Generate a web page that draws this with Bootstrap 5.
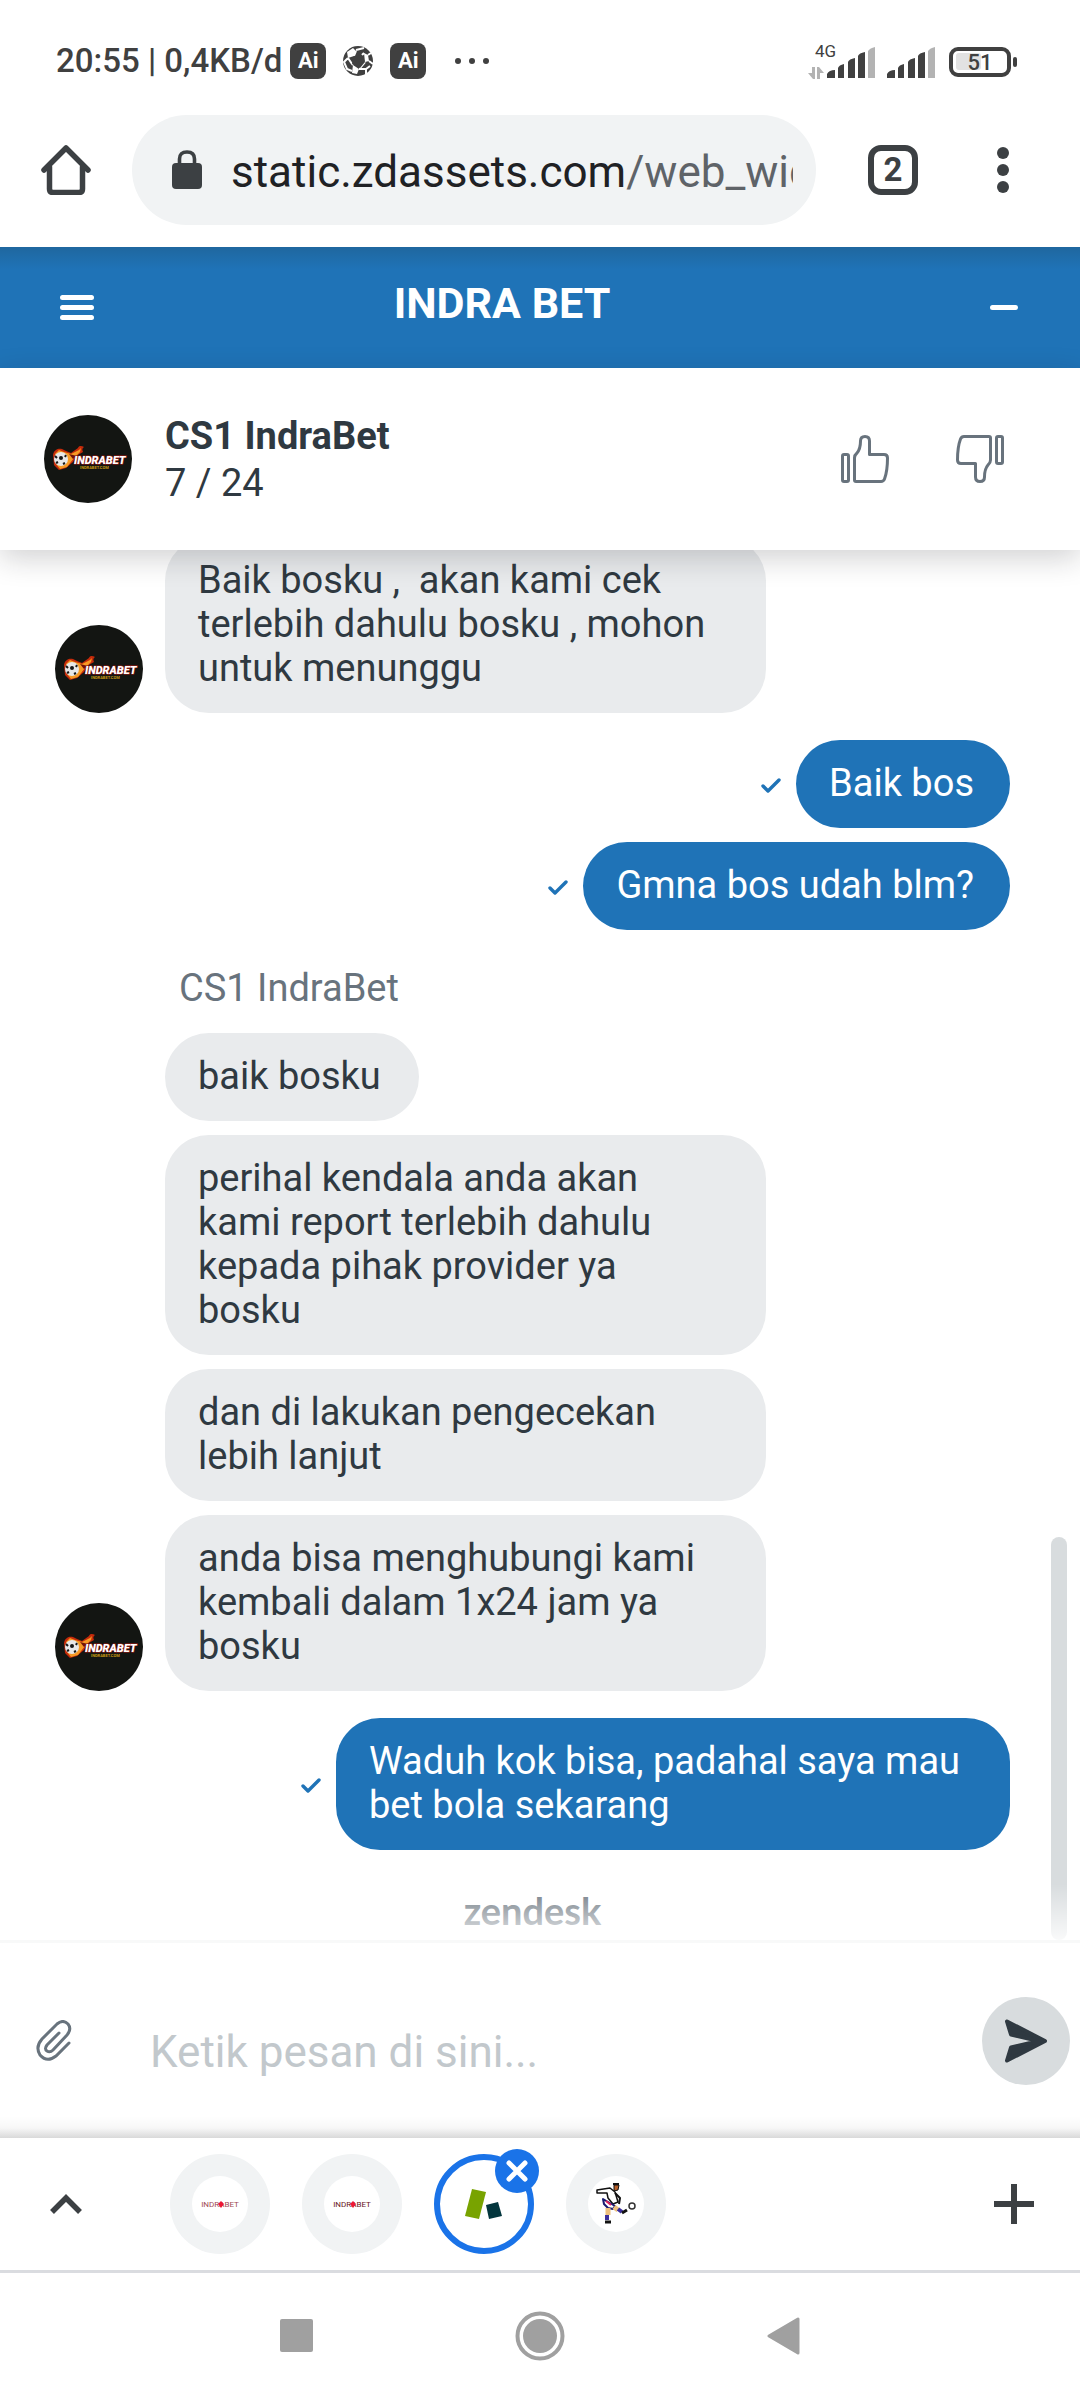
<!DOCTYPE html>
<html lang="id">
<head>
<meta charset="utf-8">
<meta name="viewport" content="width=device-width, initial-scale=1">
<title>INDRA BET – Live chat</title>
<link href="https://cdn.jsdelivr.net/npm/bootstrap@5.3.0/dist/css/bootstrap.min.css" rel="stylesheet">
<style>
  :root { --brand: #1f73b7; --ink: #2f3941; --icon: #3c4043; --muted-ink: #68737d; }
  body { font-family: Roboto, "Liberation Sans", sans-serif; color: var(--ink); background: #fff; }
  svg { display: block; flex: none; }
  .plain { border: 0; background: none; padding: 0; color: inherit; display: block; flex: none; }

  .status-bar { height: 115px; padding: 6px 63px 0 56px; color: #404040; }
  .status-clock { font-size: 33px; line-height: 40px; font-weight: 500; }
  .ai-badge { width: 36px; height: 36px; border-radius: 8px; background: #404040; color: #fff; font-size: 22px; line-height: 36px; font-weight: 700; text-align: center; }

  .address-bar { padding: 0 71px 22px 41px; color: var(--icon); }
  .url-pill { height: 110px; border-radius: 55px; background: #f1f3f4; margin-left: 41px; margin-right: 52px; padding-left: 40px; padding-right: 23px; min-width: 0; }
  .url-link { font-size: 44px; line-height: 56px; padding-top: 4px; color: #202124; margin-left: 29px; min-width: 0; }
  .url-path { color: #5f6368; }
  .tab-count { width: 50px; height: 50px; border: 6px solid var(--icon); border-radius: 13px; font-size: 33px; line-height: 38px; font-weight: 700; margin-right: 79px; text-align: center; }

  .widget-head { height: 121px; padding: 0 62px 0 60px; color: #fff; background: linear-gradient(#1f679f, var(--brand) 22px); }
  .widget-title { font-size: 43px; line-height: 48px; padding: 0 80px 10px 0; font-weight: 700; }
  .agent-bar { height: 182px; padding: 0 76px 0 44px; z-index: 2; background: #fff; box-shadow: 0 8px 28px rgba(23, 26, 28, .2); }
  .agent-text { font-size: 38px; line-height: 47px; margin-left: 33px; padding-top: 2px; }
  .rating { gap: 67px; color: var(--muted-ink); }

  .chat-log { flex: 1 0 1390px; height: 1390px; }
  .thread { padding: 0 70px 8px 55px; gap: 14px; font-size: 38px; line-height: 44px; }
  .turn { gap: 14px; }
  .turn + .turn { margin-top: 13px; }
  .agent-row { gap: 22px; }
  .agent-col { max-width: 601px; gap: 14px; }
  .bubble { border-radius: 44px; padding: 21px 38px 23px 33px; background: #e9ebed; white-space: pre-wrap; }
  .sent { gap: 15px; color: var(--brand); }
  .sent .bubble { background: var(--brand); color: #fff; max-width: 674px; padding-right: 36px; }
  .speaker { color: var(--muted-ink); padding-left: 14px; padding-top: 11px; line-height: 41px; margin-bottom: 10px; }
  .powered { font-family: Lato, sans-serif; font-weight: 700; font-size: 38px; line-height: 44px; color: var(--muted-ink); text-align: center; margin-top: 24px; }
  .log-thumb { width: 16px; height: 403px; right: 13px; bottom: 0; border-radius: 8px; background: #d8dcde; }
  .log-fade { height: 56px; bottom: 0; background: linear-gradient(rgba(255,255,255,0), rgba(255,255,255,.85)); }

  .composer { height: 198px; border-top: 3px solid #f8f9f9; padding: 0 10px 0 36px; background: linear-gradient(rgba(0,0,0,0) calc(100% - 22px), rgba(0,0,0,.03) calc(100% - 10px), rgba(0,0,0,.15)); }
  .composer-input { border: 0; outline: 0; background: none; font-size: 44px; line-height: 56px; padding: 22px 0 0; margin-left: 78px; min-width: 0; color: var(--ink); }
  .composer-input::placeholder { color: #c2c8cc; opacity: 1; }
  .send-btn { width: 88px; height: 88px; border-radius: 50%; background: #d8dcde; }

  .tab-strip { height: 135px; padding: 0 46px 0 50px; border-bottom: 3px solid #dadce0; color: var(--icon); }
  .tab-list { gap: 32px; margin-left: 88px; }
  .site-tab { width: 100px; height: 100px; border-radius: 50%; background: #f1f3f4; }
  .site-tab-active { background: #fff; border: 6px solid #1a73e8; }
  .tab-icon { width: 56px; height: 56px; border-radius: 50%; background: #fff; }
  .tab-close { width: 44px; height: 44px; border-radius: 50%; background: #1a73e8; top: -5px; right: -5px; }

  .system-nav { flex: 1 0 127px; gap: 202px; padding-bottom: 2px; }
</style>
</head>
<body>
<svg width="0" height="0" class="position-absolute" aria-hidden="true">
  <defs>
    <symbol id="agent-logo" viewBox="0 0 88 88">
      <circle cx="44" cy="44" r="44" fill="#131512"/>
      <path d="M9 40C10 34 15 33 18 34L22 36L27 38L34 33C35 30 38 31 40 32C38 33 38 35 39 37L32 41L29 47L22 53L15 55L10 50Z" fill="#c52a0a"/>
      <path d="M11 39L15 35L20 37L27 39L35 35L37 33L36 37L30 43L23 52L16 54L12 49Z" fill="#f69a24"/>
      <path d="M25 39L33 41L29 44Z" fill="#731207"/>
      <circle cx="17" cy="44" r="7" fill="#e8e8e8"/>
      <circle cx="17" cy="43" r="2" fill="#161616"/>
      <path d="M11 41L13 43M22 40L21 42M12 48L14 47M19 49L21 48" stroke="#161616" stroke-width="2"/>
      <text x="30" y="49" font-family="Roboto, sans-serif" font-size="11" font-weight="900" font-style="italic" fill="#fff" stroke="#a11c14" stroke-width="1" paint-order="stroke">INDRABET</text>
      <text x="36" y="54" font-family="Roboto, sans-serif" font-size="4" font-weight="700" fill="#c99a12">INDRABET.COM</text>
    </symbol>
    <symbol id="sent-tick" viewBox="0 0 20 16"><path d="M2 8L7 13L18 2" fill="none" stroke="currentColor" stroke-width="3.4" stroke-linecap="round" stroke-linejoin="round"/></symbol>
    <symbol id="signal" viewBox="0 0 49 31">
      <path d="M0 31V27Q2 23 8 23V31ZM11 31V21Q12 18 17 17V31ZM21 31V15Q22 12 28 11V31ZM31 31V9Q32 6 38 5V31Z" fill="#404040"/>
      <path d="M41 31V4Q43 1 48 0V31Z" fill="#b3b3b3"/>
    </symbol>
    <symbol id="thumb" viewBox="0 0 48 48">
      <g fill="none" stroke="currentColor" stroke-width="3" stroke-linejoin="round">
        <rect x="1.500" y="19.500" width="6" height="27" rx="1.500"/>
        <path d="M13.500 45V23Q13.500 20 16 18Q19.500 14 19.500 6Q19.500 1.500 24 1.500Q28.500 1.500 28.500 6V19.500H43Q46.500 19.500 46.500 23Q46.500 36 43.500 44Q42.500 46.500 40 46.500H15Q13.500 46.500 13.500 45Z"/>
      </g>
    </symbol>
    <symbol id="mini-logo" viewBox="0 0 56 56">
      <text x="28" y="31" text-anchor="middle" font-family="Roboto, sans-serif" font-size="8" font-weight="400" fill="currentColor">INDRABET</text>
      <path d="M29 25l3 3-3 4-3-4z" fill="#ee1733"/>
    </symbol>
  </defs>
</svg>

<div class="d-flex flex-column min-vh-100">
  <div class="status-bar d-flex align-items-center flex-shrink-0">
    <span class="status-clock text-nowrap">20:55 | 0,4KB/d</span>
    <span class="ai-badge ms-2">Ai</span>
    <svg class="ms-3" width="32" height="32" viewBox="0 0 32 32" role="img" aria-label="Bola">
      <circle cx="16" cy="16" r="15" fill="#404040"/>
      <path d="M5 7L11 3L14 6L12 11L6 13ZM22 8L26 10L27 16L23 17ZM11 20L17 24L15 29L10 28Z" fill="#fff"/>
      <path d="M12 11L14 6M20 10L22 8M23 17L18 23M10 19L6 13M10 19L11 20M14 5L22 3M26 10L29 8M27 16L31 19M17 24L24 24L28 21M24 24L24 29M6 13L2 17L5 24L10 26" fill="none" stroke="#fff" stroke-width="2"/>
      <path d="M12 11L20 10L23 17L18 23L10 19Z" fill="#404040"/>
    </svg>
    <span class="ai-badge ms-3">Ai</span>
    <svg class="ms-4" width="50" height="8" viewBox="-5 0 50 8" fill="#404040"><circle cx="3" cy="4" r="3"/><circle cx="17" cy="4" r="3"/><circle cx="31" cy="4" r="3"/></svg>
    <svg class="ms-auto" width="210" height="36" viewBox="0 0 210 36" role="img" aria-label="4G, baterai 51%">
      <text x="8" y="14" font-family="Roboto, sans-serif" font-size="17" fill="#404040">4G</text>
      <path d="M5 24H8V36H6L1 30H5ZM10 24H12L17 30H13V36H10Z" fill="#b3b3b3"/>
      <use href="#signal" x="20" y="4" width="49" height="31"/>
      <use href="#signal" x="80" y="4" width="49" height="31"/>
      <rect x="149" y="10" width="25" height="17" rx="3" fill="#e2e2e2"/>
      <rect x="144" y="6" width="58" height="26" rx="7" fill="none" stroke="#404040" stroke-width="4"/>
      <rect x="206" y="14" width="4" height="10" rx="2" fill="#404040"/>
      <text x="173" y="27" text-anchor="middle" font-family="Roboto, sans-serif" font-size="22" font-weight="500" fill="#404040">51</text>
    </svg>
  </div>

  <nav class="address-bar d-flex align-items-center flex-shrink-0" aria-label="Browser">
    <button class="plain" type="button" aria-label="Beranda">
      <svg width="50" height="50" viewBox="0 0 50 50" fill="none" stroke="currentColor" stroke-width="5.500" stroke-linecap="round" stroke-linejoin="round"><path d="M3 25L25 3L47 25"/><path d="M8.500 22V44Q8.500 47.500 12 47.500H38Q41.500 47.500 41.500 44V22"/></svg>
    </button>
    <div class="url-pill d-flex align-items-center flex-fill">
      <svg width="30" height="40" viewBox="0 0 30 40"><path d="M7.500 15V9Q7.500 2 15 2Q22.500 2 22.500 9V15" fill="none" stroke="#3c4043" stroke-width="3.600"/><rect y="13" width="30" height="26" rx="4" fill="#3c4043"/></svg>
      <a class="url-link text-decoration-none text-nowrap overflow-hidden" href="#">static.zdassets.com<span class="url-path">/web_widget</span></a>
    </div>
    <button class="plain tab-count" type="button" aria-label="Tab terbuka">2</button>
    <button class="plain" type="button" aria-label="Menu"><svg width="12" height="48" viewBox="0 0 12 48" fill="currentColor"><circle cx="6" cy="7" r="6"/><circle cx="6" cy="24" r="6"/><circle cx="6" cy="41" r="6"/></svg></button>
  </nav>

  <header class="widget-head d-flex align-items-center flex-shrink-0">
    <button class="plain" type="button" aria-label="Menu obrolan"><svg width="34" height="26" viewBox="0 0 34 26" fill="#fff"><rect width="34" height="5" rx="2.500"/><rect y="10" width="34" height="5" rx="2.500"/><rect y="20" width="34" height="5" rx="2.500"/></svg></button>
    <h1 class="widget-title flex-fill text-center mb-0">INDRA BET</h1>
    <button class="plain" type="button" aria-label="Perkecil"><svg width="28" height="5"><rect width="28" height="5" rx="2.500" fill="#fff"/></svg></button>
  </header>

  <section class="agent-bar d-flex align-items-center flex-shrink-0 position-relative">
    <svg width="88" height="88" role="img" aria-label="IndraBet"><use href="#agent-logo"/></svg>
    <div class="agent-text flex-fill"><div class="fw-bold">CS1 IndraBet</div><div>7 / 24</div></div>
    <div class="rating d-flex">
      <button class="plain" type="button" aria-label="Suka"><svg width="48" height="48"><use href="#thumb"/></svg></button>
      <button class="plain" type="button" aria-label="Tidak suka"><svg width="48" height="48"><use href="#thumb" transform="rotate(180 24 24)"/></svg></button>
    </div>
  </section>

  <main class="chat-log position-relative overflow-hidden d-flex flex-column justify-content-end">
    <div class="thread d-flex flex-column">
      <div class="turn d-flex flex-column">
        <div class="agent-row d-flex align-items-end">
          <svg width="88" height="88" role="img" aria-label="IndraBet"><use href="#agent-logo"/></svg>
          <div class="agent-col d-flex flex-column align-items-start"><div class="bubble">Baik bosku ,  akan kami cek terlebih dahulu bosku , mohon untuk menunggu</div></div>
        </div>
      </div>
      <div class="turn d-flex flex-column">
        <div class="sent d-flex align-items-center justify-content-end"><svg class="mt-1" width="20" height="16"><use href="#sent-tick"/></svg><div class="bubble">Baik bos</div></div>
        <div class="sent d-flex align-items-center justify-content-end"><svg class="mt-1" width="20" height="16"><use href="#sent-tick"/></svg><div class="bubble">Gmna bos udah blm?</div></div>
      </div>
      <div class="turn d-flex flex-column">
        <div class="agent-row d-flex align-items-end">
          <svg width="88" height="88" role="img" aria-label="IndraBet"><use href="#agent-logo"/></svg>
          <div class="agent-col d-flex flex-column align-items-start">
            <div class="speaker">CS1 IndraBet</div>
            <div class="bubble">baik bosku</div>
            <div class="bubble">perihal kendala anda akan kami report terlebih dahulu kepada pihak provider ya bosku</div>
            <div class="bubble">dan di lakukan pengecekan lebih lanjut</div>
            <div class="bubble">anda bisa menghubungi kami kembali dalam 1x24 jam ya bosku</div>
          </div>
        </div>
      </div>
      <div class="turn d-flex flex-column">
        <div class="sent d-flex align-items-center justify-content-end"><svg class="mt-1" width="20" height="16"><use href="#sent-tick"/></svg><div class="bubble">Waduh kok bisa, padahal saya mau bet bola sekarang</div></div>
      </div>
      <a class="powered text-decoration-none" href="#">zendesk</a>
    </div>
    <div class="log-thumb position-absolute"></div>
    <div class="log-fade position-absolute start-0 end-0 pe-none"></div>
  </main>

  <form class="composer d-flex align-items-center flex-shrink-0">
    <button class="plain" type="button" aria-label="Lampirkan berkas">
      <svg width="36" height="42" viewBox="0 0 36 42" fill="none" stroke="#68737d" stroke-width="3" stroke-linecap="round"><path d="M23 13L11 25Q8 29 11 31Q14 33 17 30L31 15Q36 9 32 4Q27 -1 21 4L6 19Q-1 27 4 35Q11 43 20 36L33 23"/></svg>
    </button>
    <input class="composer-input flex-fill" type="text" placeholder="Ketik pesan di sini..." aria-label="Ketik pesan">
    <button class="plain send-btn d-flex align-items-center justify-content-center" type="submit" aria-label="Kirim">
      <svg width="46" height="46" viewBox="0 0 46 46" fill="#2f3941" stroke="#2f3941" stroke-linejoin="round"><path d="M4 3.500L42 23L4 42.500L8 29.500L36 23L8 16.500Z" stroke-width="4"/></svg>
    </button>
  </form>

  <nav class="tab-strip d-flex align-items-center flex-shrink-0" aria-label="Tab situs">
    <button class="plain" type="button" aria-label="Perluas"><svg width="32" height="20" viewBox="0 0 32 20" fill="none" stroke="currentColor" stroke-width="5.500"><path d="M2 18L16 4L30 18"/></svg></button>
    <div class="tab-list d-flex me-auto">
      <button class="plain site-tab d-flex align-items-center justify-content-center" type="button" aria-label="Indrabet"><span class="tab-icon"><svg width="56" height="56" color="#a04a52"><use href="#mini-logo"/></svg></span></button>
      <button class="plain site-tab d-flex align-items-center justify-content-center" type="button" aria-label="Indrabet"><span class="tab-icon"><svg width="56" height="56" color="#6a1620"><use href="#mini-logo"/></svg></span></button>
      <div class="position-relative">
        <button class="plain site-tab site-tab-active d-flex align-items-center justify-content-center" type="button" aria-label="Obrolan"><svg width="40" height="32" viewBox="0 0 40 32"><path d="M8 1L22 4L15 31L1 28Z" fill="#78a300"/><path d="M22 17L34 14L38 28L25 31Z" fill="#03363d"/></svg></button>
        <button class="plain tab-close position-absolute d-flex align-items-center justify-content-center" type="button" aria-label="Tutup tab"><svg width="22" height="22" viewBox="0 0 22 22" stroke="#fff" stroke-width="5" stroke-linecap="round"><path d="M3 3L19 19M19 3L3 19"/></svg></button>
      </div>
      <button class="plain site-tab d-flex align-items-center justify-content-center" type="button" aria-label="Bola"><span class="tab-icon"><svg width="56" height="56" viewBox="0 0 56 56" stroke-linejoin="round">
        <path d="M9 14L22 12L27 16L30 26L25 28L20 22L19 17L9 17Z" fill="#fff" stroke="#111" stroke-width="1.500"/>
        <path d="M27 17L32 22L31 28" fill="none" stroke="#111" stroke-width="2"/>
        <path d="M26 9L31 9L30 14L26 15Z" fill="#b85f28" stroke="#111"/><path d="M25 8H31" stroke="#111" stroke-width="2"/>
        <path d="M15 23L20 26L27 30L25 33L20 32L16 28Z" fill="#fff" stroke="#191970" stroke-width="2"/>
        <path d="M18 25L23 29" stroke="#e0245e" stroke-width="2"/>
        <path d="M20 32V39M26 31L30 34" stroke="#edc07e" stroke-width="5"/>
        <path d="M19 39V44M30 33L34 36" stroke="#3b2f9c" stroke-width="4"/>
        <path d="M17 46H23M34 37L39 34" stroke="#111" stroke-width="3"/>
        <circle cx="44" cy="30" r="3" fill="#fff" stroke="#333" stroke-width="1.500"/>
      </svg></span></button>
    </div>
    <button class="plain" type="button" aria-label="Tab baru"><svg width="40" height="40" stroke="currentColor" stroke-width="6"><path d="M20 0V40M0 20H40"/></svg></button>
  </nav>

  <nav class="system-nav d-flex align-items-center justify-content-center" aria-label="Navigasi sistem">
    <button class="plain" type="button" aria-label="Terbaru"><svg width="33" height="33"><rect width="33" height="33" rx="2" fill="#a0a0a0"/></svg></button>
    <button class="plain" type="button" aria-label="Layar utama"><svg width="50" height="50" viewBox="0 0 50 50"><circle cx="25" cy="25" r="22.500" fill="none" stroke="#a0a0a0" stroke-width="4"/><circle cx="25" cy="25" r="17" fill="#a0a0a0"/></svg></button>
    <button class="plain" type="button" aria-label="Kembali"><svg width="33" height="38" viewBox="0 0 33 38"><path d="M2 19L31 2V36Z" fill="#a0a0a0" stroke="#a0a0a0" stroke-width="3" stroke-linejoin="round"/></svg></button>
  </nav>
</div>
<script src="https://cdn.jsdelivr.net/npm/bootstrap@5.3.0/dist/js/bootstrap.bundle.min.js"></script>
</body>
</html>
